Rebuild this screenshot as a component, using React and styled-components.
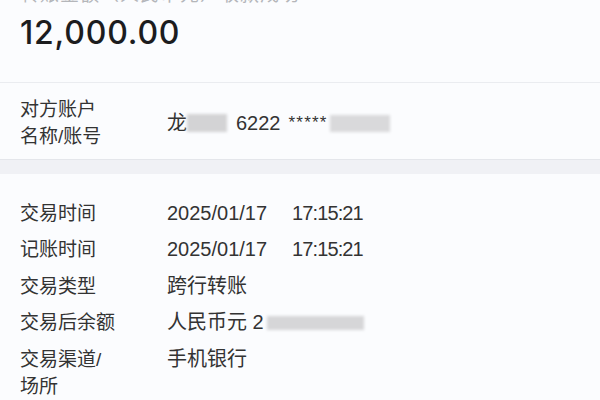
import styled, { createGlobalStyle } from 'styled-components';

const GlobalStyle = createGlobalStyle`
    html, body {
        margin: 0;
        padding: 0;
        background: #fbfcfe;
        overflow: hidden;
    }
    body {
        font-family: "Liberation Sans", "Noto Sans CJK SC", sans-serif;
        color: #333;
    }
`

const Page = styled.div`
    width: 600px;
    height: 400px;
    overflow: hidden;
    background: #fbfcfe;
`

const Header = styled.section`
    display: flow-root;
    height: 83px;
    padding-left: 20px;
    box-sizing: border-box;
    border-bottom: 1px solid #eaecf0;
`

const Caption = styled.div`
    font-size: 19px;
    line-height: 20px;
    margin-top: -15px;
    color: #b4b6ba;
    letter-spacing: 1px;
`

const Amount = styled.div`
    font-family: Inter, "Liberation Sans", sans-serif;
    font-size: 32px;
    font-weight: 500;
    line-height: 40px;
    margin-top: 8px;
    letter-spacing: 0.8px;
    color: #1c1c1e;
`

const Section = styled.section`
    padding: ${({ $pad }) => $pad};
`

const Band = styled.div`
    height: 15px;
    background: #f0f1f5;
    border-top: 1px solid #e4e6eb;
    box-sizing: border-box;
`

const Row = styled.div`
    display: grid;
    grid-template-columns: 147px 1fr;
    align-items: ${({ $center }) => ($center ? 'center' : 'start')};
    padding: ${({ $gap = 0 }) => `${$gap}px 0`};
    padding-left: 20px;
`

const Label = styled.div`
    font-size: 19px;
    line-height: 27px;
    color: #333;
`

const Value = styled.div`
    font-size: 20px;
    line-height: 27px;
    color: #333;
    display: flex;
    align-items: center;
    white-space: nowrap;
`

const Time = styled.span`
    margin-left: 25px;
    letter-spacing: -0.9px;
`

const Stars = styled.span`
    font-size: 17px;
    margin-left: 8px;
    letter-spacing: 1.2px;
    position: relative;
    top: -1px;
`

const Blur = styled.span`
    display: inline-block;
    width: ${({ $w }) => $w}px;
    height: ${({ $h = 16 }) => $h}px;
    margin: ${({ $m = '0' }) => $m};
    background: ${({ $bg = '#d3d3d5' }) => $bg};
    filter: blur(1.5px);
`

export default function App() {
    return (
        <Page>
            <GlobalStyle />
            <Header>
                <Caption>转账金额（人民币元）收款成功</Caption>
                <Amount>12,000.00</Amount>
            </Header>
            <Section $pad="13px 0 9px">
                <Row $center>
                    <Label>
                        对方账户<br />名称/账号
                    </Label>
                    <Value>
                        龙
                        <Blur $w={40} $h={18} $m="0 9px 0 0" />
                        6222
                        <Stars>*****</Stars>
                        <Blur $w={60} $h={17} $m="0 0 0 2px" $bg="#d9d9db" />
                    </Value>
                </Row>
            </Section>
            <Band />
            <Section $pad="21px 0 0">
                <Row $gap={4.75}>
                    <Label>交易时间</Label>
                    <Value>2025/01/17<Time>17:15:21</Time></Value>
                </Row>
                <Row $gap={4.75}>
                    <Label>记账时间</Label>
                    <Value>2025/01/17<Time>17:15:21</Time></Value>
                </Row>
                <Row $gap={4.75}>
                    <Label>交易类型</Label>
                    <Value>跨行转账</Value>
                </Row>
                <Row $gap={4.75}>
                    <Label>交易后余额</Label>
                    <Value>
                        人民币元&nbsp;2
                        <Blur $w={97} $h={14} $m="0 0 0 3px" $bg="#d6d6d8" />
                    </Value>
                </Row>
                <Row $gap={4.75}>
                    <Label>交易渠道/<br />场所</Label>
                    <Value>手机银行</Value>
                </Row>
            </Section>
        </Page>
    );
}
